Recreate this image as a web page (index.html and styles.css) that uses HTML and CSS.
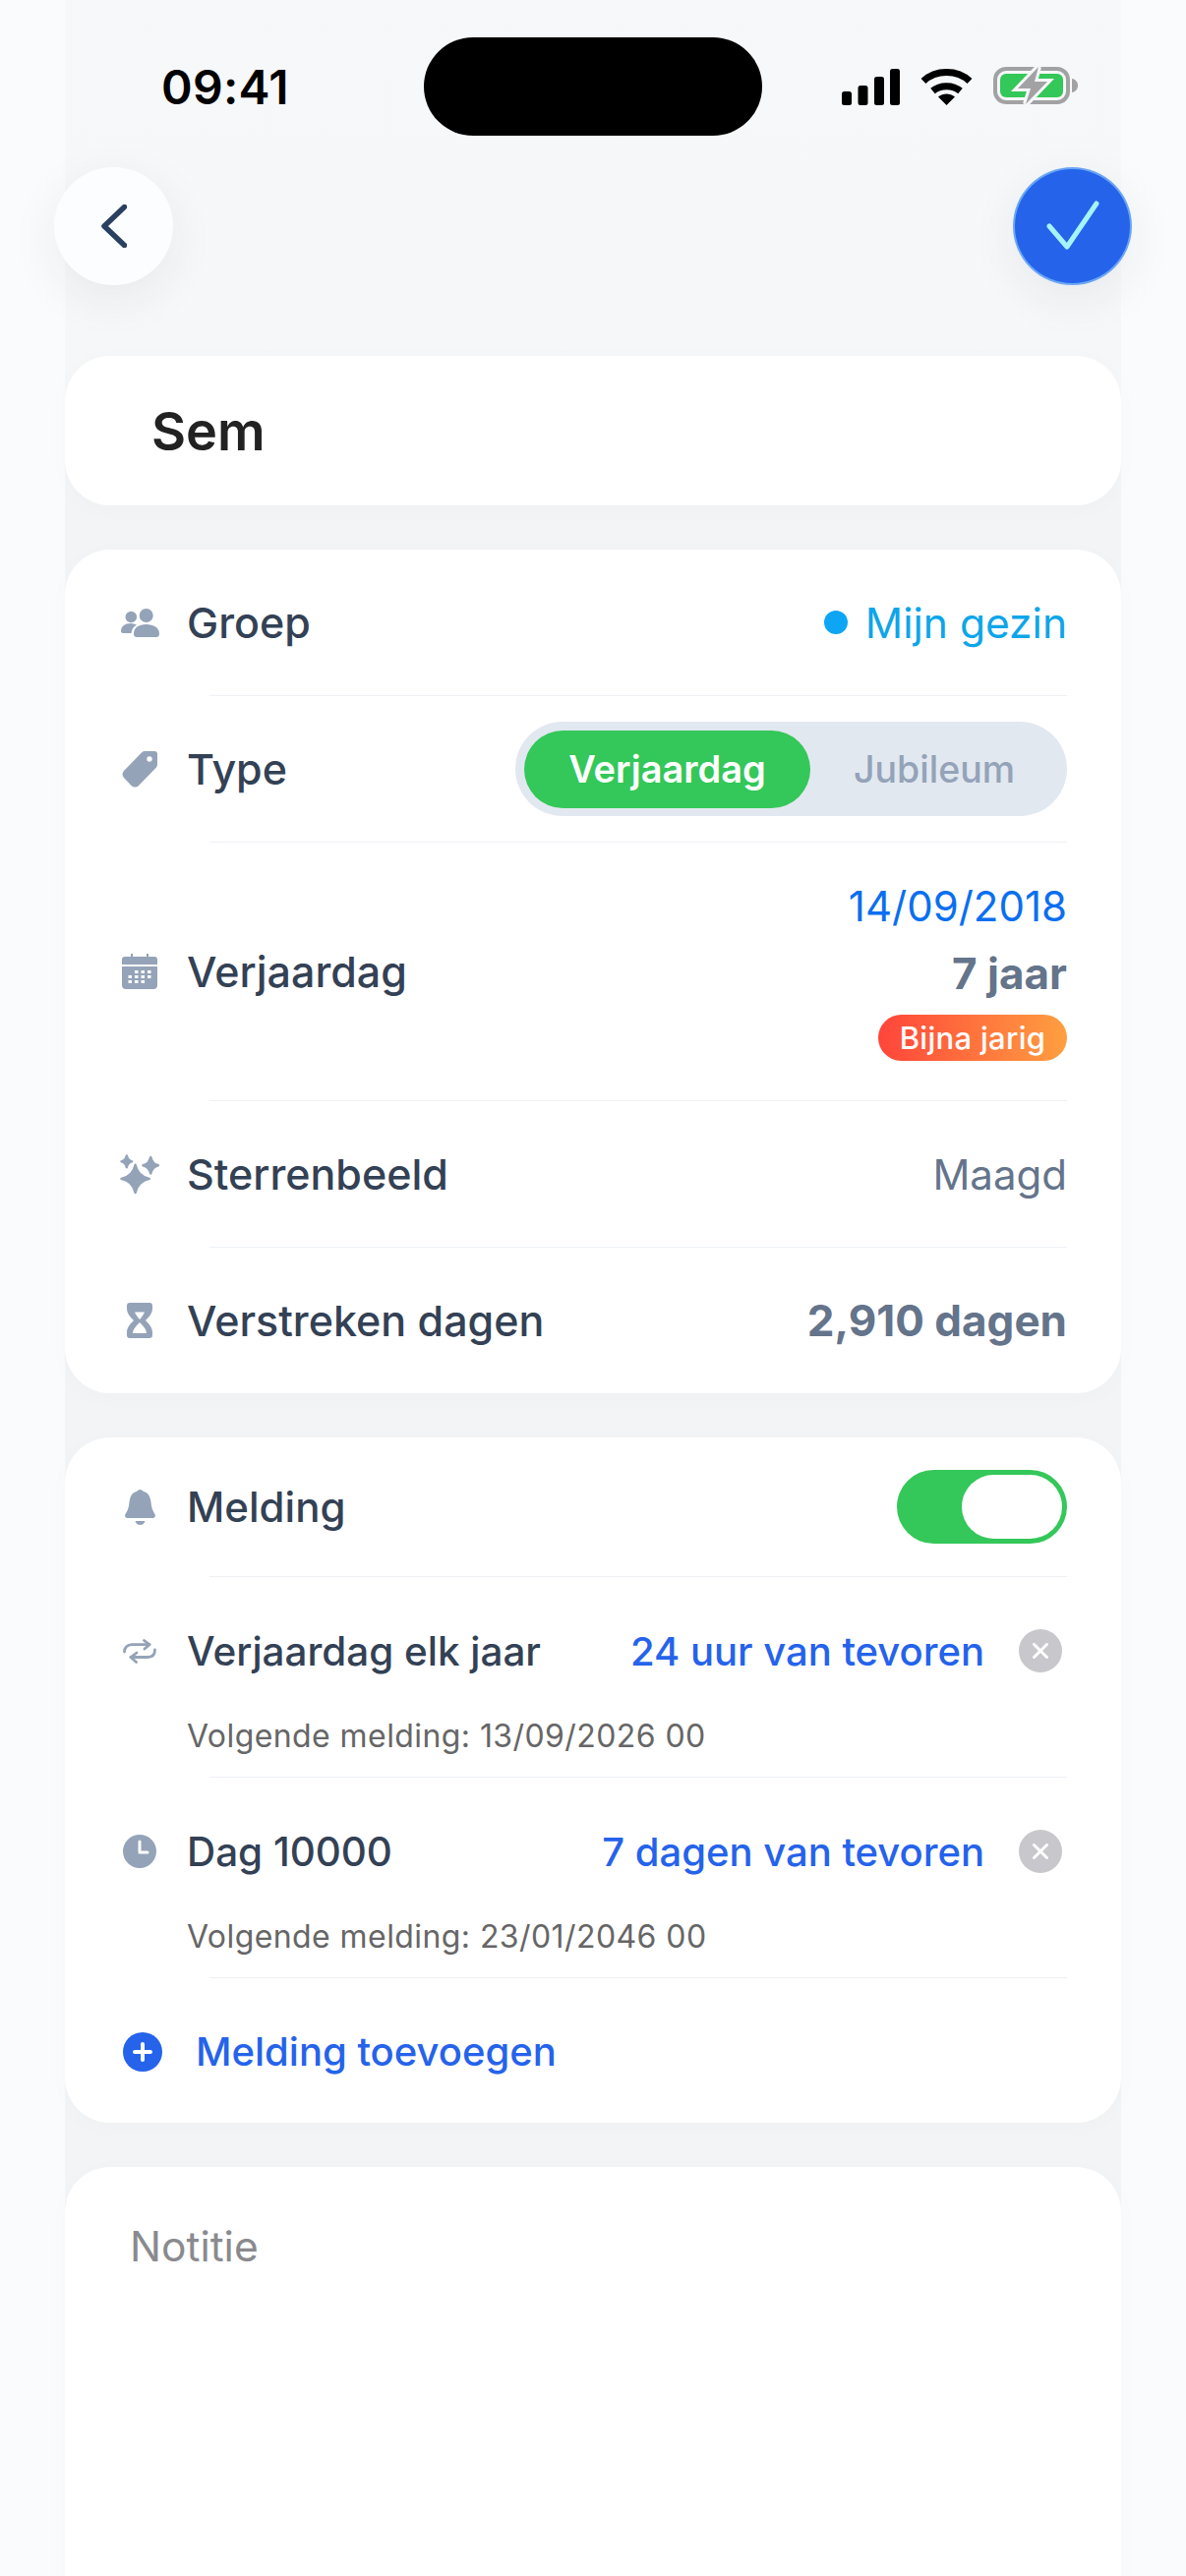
FILE: index.html
```html
<!DOCTYPE html>
<html lang="nl">
<head>
<meta charset="utf-8">
<title>Sem</title>
<link rel="stylesheet" href="styles.css">
</head>
<body>
<div class="phone">
  <div class="status">
    <span class="time">09:41</span>
    <div class="island"></div>
    <div class="sys">
      <svg class="i-signal" viewBox="0 0 59 38"><rect x="0" y="24" width="10" height="14" rx="2.5"/><rect x="16.500" y="18" width="10" height="20" rx="2.500"/><rect x="33" y="9" width="10" height="29" rx="2.500"/><rect x="49" y="1" width="10" height="37" rx="2.500"/></svg>
      <svg class="i-wifi" viewBox="0 0 53 38"><path class="wifi-arc" d="M3 13.500C15.500 1.500 37.500 1.500 50 13.500"/><path class="wifi-arc" d="M12.500 23.500C20 17 33 17 40.500 23.500"/><path d="M26.500 38L18 29.500C23 25.500 30 25.500 35 29.500Z"/></svg>
      <svg class="i-batt" viewBox="0 0 86 40"><rect class="batt-shell" x="2" y="3" width="74" height="34" rx="11"/><rect class="batt-fill" x="7" y="8" width="64" height="24" rx="6"/><path class="batt-cap" d="M80 13C83.500 13.500 86 16 86 20S83.500 26.500 80 27Z"/><path class="batt-gap" d="M46 1L25 23H38L33 39L55 16H42Z"/><path class="batt-bolt" d="M46 1L25 23H38L33 39L55 16H42Z"/></svg>
    </div>
  </div>

  <div class="nav">
    <button class="round back"><svg class="i-back" viewBox="0 0 26 44"><path d="M23.500 2.500L3 22L23.500 41.500"/></svg></button>
    <button class="round ok"><svg class="i-ok" viewBox="0 0 56 52"><path d="M4 26L22 47L52 3"/></svg></button>
  </div>

  <main class="content">
    <section class="card name-card"><span class="name">Sem</span></section>

    <section class="card">
      <div class="row">
        <span class="ic"><svg class="i-group" viewBox="0 0 39 29"><circle cx="10.300" cy="8.500" r="5.800"/><circle cx="25.700" cy="7" r="7"/><path d="M13 25.500C13 19.500 18 16 25.700 16C33 16 39 19.500 39 25.500C39 28 38 29 36 29H16C14 29 13 28 13 25.500Z"/><path d="M0 23C0 18 4 15 10 15C12 15 14 15.500 16 16.500C13 18 11 21 10.500 25H2C1 25 0 24 0 23Z"/></svg></span>
        <span class="label">Groep</span>
        <span class="group-val"><i class="dot"></i>Mijn gezin</span>
      </div>
      <div class="divider"></div>
      <div class="row">
        <span class="ic"><svg class="i-tag" viewBox="0 0 36 37"><path d="M23 0H33C35 0 36 1 36 3V13C36 15 35.500 16 34 17.500L17 35C15 37 12 37 10 35.500L2 27C0 25 0 22 2 20L19.500 2C21 .5 22 0 23 0Z"/><circle class="hole" cx="28" cy="8" r="2.700"/></svg></span>
        <span class="label">Type</span>
        <div class="segment">
          <span class="seg-on">Verjaardag</span>
          <span class="seg-off">Jubileum</span>
        </div>
      </div>
      <div class="divider"></div>
      <div class="row row-tall">
        <span class="ic"><svg class="i-cal" viewBox="0 0 36 36"><path d="M3 3H9V0H11V3H25V0H27V3H33C35 3 36 4 36 6V11H0V6C0 4 1 3 3 3Z"/><path d="M0 13H36V32C36 34.500 34.500 36 32 36H4C1.500 36 0 34.500 0 32Z"/><g class="hole"><rect x="13" y="17" width="3.500" height="3"/><rect x="19.500" y="17" width="3.500" height="3"/><rect x="26" y="17" width="3.500" height="3"/><rect x="6.500" y="22" width="3.500" height="3"/><rect x="13" y="22" width="3.500" height="3"/><rect x="19.500" y="22" width="3.500" height="3"/><rect x="26" y="22" width="3.500" height="3"/><rect x="6.500" y="27" width="3.500" height="3"/><rect x="13" y="27" width="3.500" height="3"/><rect x="19.500" y="27" width="3.500" height="3"/></g></svg></span>
        <span class="label">Verjaardag</span>
        <div class="date-col">
          <span class="date">14/09/2018</span>
          <span class="age">7 jaar</span>
          <span class="soon">Bijna jarig</span>
        </div>
      </div>
      <div class="divider"></div>
      <div class="row">
        <span class="ic"><svg class="i-spark" viewBox="0 0 41 42"><path d="M16 11.500Q18.500 23.500 30.500 26Q18.500 28.500 16 40.500Q13.500 28.500 1.500 26Q13.500 23.500 16 11.500Z"/><path d="M7 2Q8 7 12.500 8Q8 9 7 14Q6 9 1.500 8Q6 7 7 2Z"/><path d="M32 3.500Q33.500 10.500 40 12Q33.500 13.500 32 20.500Q30.500 13.500 24 12Q30.500 10.500 32 3.500Z"/></svg></span>
        <span class="label">Sterrenbeeld</span>
        <span class="plain">Maagd</span>
      </div>
      <div class="divider"></div>
      <div class="row">
        <span class="ic"><svg class="i-hour" viewBox="0 0 26 36"><path d="M3 0H23C25 0 26 1 26 3V6C26 11 22 15 19 18C22 21 26 25 26 30V33C26 35 25 36 23 36H3C1 36 0 35 0 33V30C0 25 4 21 7 18C4 15 0 11 0 6V3C0 1 1 0 3 0Z"/><path class="hole" d="M8 9.500H18C17 12 15 14.500 13 17C11 14.500 9 12 8 9.500Z"/><path class="hole" d="M13 20C16 23 20 27 20 31H6C6 27 10 23 13 20Z"/></svg></span>
        <span class="label">Verstreken dagen</span>
        <span class="strong">2,910 dagen</span>
      </div>
    </section>

    <section class="card">
      <div class="row row-first">
        <span class="ic"><svg class="i-bell" viewBox="0 0 31 36"><path d="M15.500 0C17 0 18 1 19 2C24 3 26 8 26.500 13C27 18 28 21 30.500 25C31.500 27 30.500 29 28.500 29H2.500C.5 29 -.5 27 .5 25C3 21 4 18 4.500 13C5 8 7 3 12 2C13 1 14 0 15.500 0Z"/><path d="M10.500 32H20.500C19.500 35 17.500 36 15.500 36S11.500 35 10.500 32Z"/></svg></span>
        <span class="label label-m">Melding</span>
        <div class="toggle"><span class="thumb"></span></div>
      </div>
      <div class="divider"></div>
      <div class="alert">
        <div class="alert-top">
          <span class="ic"><svg class="i-repeat" viewBox="0 0 34 25"><path d="M1.500 13C1.500 9 4.500 5.700 9 5.700H27"/><path d="M21.500 1.500L27 5.700L22 10"/><path d="M32.500 11C32.500 15.500 30 18.500 25 18.500H8"/><path d="M14 14L8 18.500L13.500 23.500"/></svg></span>
          <span class="label label-s">Verjaardag elk jaar</span>
          <span class="link">24 uur van tevoren</span>
          <span class="clear"><svg class="i-x" viewBox="0 0 16 16"><path d="M1.500 1.500L14.500 14.500M14.500 1.500L1.500 14.500"/></svg></span>
        </div>
        <p class="next">Volgende melding: 13/09/2026 00</p>
      </div>
      <div class="divider"></div>
      <div class="alert">
        <div class="alert-top">
          <span class="ic"><svg class="i-clock" viewBox="0 0 34 34"><circle cx="17" cy="17" r="17"/><path class="hands" d="M17 7V18H25"/></svg></span>
          <span class="label label-s">Dag 10000</span>
          <span class="link">7 dagen van tevoren</span>
          <span class="clear"><svg class="i-x" viewBox="0 0 16 16"><path d="M1.500 1.500L14.500 14.500M14.500 1.500L1.500 14.500"/></svg></span>
        </div>
        <p class="next">Volgende melding: 23/01/2046 00</p>
      </div>
      <div class="divider"></div>
      <div class="add">
        <span class="add-ic"><svg class="i-plus" viewBox="0 0 20 20"><path d="M10 2V18M2 10H18"/></svg></span>
        <span class="add-text">Melding toevoegen</span>
      </div>
    </section>

    <section class="card note"><span class="note-text">Notitie</span></section>
  </main>
</div>
</body>
</html>
```

FILE: styles.css
```css
* { box-sizing: border-box; }
html, body { margin: 0; padding: 0; }
body { width: 1206px; height: 2620px; overflow: hidden; font-family: Inter, "Noto Sans", sans-serif; }
.phone {
  width: 1206px; height: 2620px; overflow: hidden; display: flex; flex-direction: column;
  background:
    linear-gradient(180deg, rgba(250, 251, 252, .55) 0, rgba(250, 251, 252, .5) 320px, rgba(250, 251, 252, 0) 520px),
    linear-gradient(90deg, #fafbfc 66px, #f3f4f6 66px, #f3f4f6 1140px, #fafbfc 1140px);
}
svg { display: block; }
p { margin: 0; }
button { border: 0; padding: 0; }

.status { height: 170px; flex: none; padding: 38px 0 0 164px; display: flex; align-items: flex-start; }
.time { font-size: 48px; font-weight: 600; color: #000; line-height: 58px; margin-top: 22px; width: 267px; flex: none; letter-spacing: .3px; }
.island { width: 344px; height: 100px; background: #000; border-radius: 50px; flex: none; }
.sys { display: flex; align-items: flex-end; gap: 21px; margin: 30px 0 0 81px; height: 39px; }
.i-signal { width: 59px; height: 38px; fill: #000; }
.i-wifi { width: 53px; height: 38px; fill: #000; }
.wifi-arc { fill: none; stroke: #000; stroke-width: 7; }
.i-batt { width: 86px; height: 40px; }
.batt-shell { fill: none; stroke: #a2a2a5; stroke-width: 4; }
.batt-fill { fill: #34c759; }
.batt-cap { fill: #a2a2a5; }
.batt-gap { fill: #f6f7f9; stroke: #f6f7f9; stroke-width: 6; }
.batt-bolt { fill: #a2a2a5; }

.nav { height: 120px; flex: none; padding: 0 55px; display: flex; justify-content: space-between; }
.round { width: 121px; height: 120px; border-radius: 50%; display: flex; align-items: center; justify-content: center; box-shadow: 0 14px 50px rgba(30, 41, 59, .07); }
.back { background: #fcfdfe; }
.ok { background: #2563eb; border: 2px solid #6aa6f5; }
.i-back { width: 26px; height: 44px; fill: none; stroke: #2a4060; stroke-width: 5.5; stroke-linecap: round; stroke-linejoin: round; }
.i-ok { width: 56px; height: 52px; fill: none; stroke: #a5f3fc; stroke-width: 5; stroke-linecap: round; stroke-linejoin: round; }

.content { margin: 72px 66px 0; display: flex; flex-direction: column; gap: 45px; }
.card { background: #fff; border-radius: 46px; box-shadow: 0 4px 24px rgba(30, 41, 59, .02); }
.name-card { height: 152px; padding-left: 88px; display: flex; align-items: center; flex: none; }
.name { font-size: 54px; font-weight: 600; color: #222; }

.row { height: 148px; padding: 0 55px 0 56px; display: flex; align-items: center; }
.row-tall { height: 262px; }
.row-first { height: 141px; }
.divider { height: 1px; margin: 0 55px 0 147px; background: #eef0f4; }
.ic { width: 40px; flex: none; display: flex; justify-content: center; margin-right: 28px; }
.label { font-size: 43px; font-weight: 500; color: #334155; flex: 1; white-space: nowrap; }
.label-m { font-size: 42px; }
.label-s { font-size: 40.400px; }
.hole { fill: #fff; }

.i-group, .i-tag, .i-cal, .i-spark, .i-hour, .i-bell { fill: #94a3b8; }
.i-group { width: 39px; height: 29px; }
.i-tag { width: 36px; height: 37px; }
.i-cal { width: 36px; height: 36px; }
.i-spark { width: 41px; height: 42px; stroke: #94a3b8; stroke-width: 2.5; stroke-linejoin: round; }
.i-hour { width: 26px; height: 36px; }
.i-bell { width: 31px; height: 36px; }
.i-repeat { width: 34px; height: 25px; fill: none; stroke: #94a3b8; stroke-width: 2.8; stroke-linecap: round; stroke-linejoin: round; }
.i-clock { width: 34px; height: 34px; fill: #94a3b8; }
.hands { fill: none; stroke: #fff; stroke-width: 3; stroke-linecap: round; stroke-linejoin: round; }

.group-val { display: flex; align-items: center; gap: 18px; font-size: 42.500px; color: #0ea5e9; }
.dot { width: 24px; height: 24px; border-radius: 50%; background: #0ea5f5; }

.segment { width: 561px; height: 96px; border-radius: 48px; background: #e2e8f0; padding: 9px; display: flex; align-items: center; flex: none; }
.seg-on { width: 291px; height: 79px; border-radius: 40px; background: #34c759; color: #fff; font-size: 38px; font-weight: 600; display: flex; align-items: center; justify-content: center; }
.seg-off { flex: 1; text-align: center; font-size: 37.500px; font-weight: 500; color: #94a3b8; }

.date-col { display: flex; flex-direction: column; align-items: flex-end; }
.date { font-size: 42px; color: #0a6ff0; line-height: 50px; }
.age { font-size: 44px; font-weight: 700; color: #64748b; line-height: 50px; margin-top: 18px; }
.soon { margin-top: 17px; height: 47px; width: 192px; border-radius: 24px; background: linear-gradient(90deg, #ff453a, #ff9f40); color: #fff; font-size: 31px; font-weight: 500; letter-spacing: .3px; display: flex; align-items: center; justify-content: center; }
.plain { font-size: 42px; color: #64748b; }
.strong { font-size: 44px; font-weight: 700; color: #64748b; }

.toggle { width: 173px; height: 75px; border-radius: 38px; background: #34c759; padding: 5px; display: flex; justify-content: flex-end; flex: none; }
.thumb { width: 102px; height: 65px; border-radius: 33px; background: #fff; }

.alert { height: 203px; padding: 0 60px 0 56px; display: flex; flex-direction: column; }
.alert-top { height: 150px; display: flex; align-items: center; }
.link { font-size: 40px; font-weight: 500; color: #2563eb; white-space: nowrap; }
.clear { width: 44px; height: 44px; margin-left: 35px; border-radius: 50%; background: #c7c7cc; display: flex; align-items: center; justify-content: center; flex: none; }
.i-x { width: 16px; height: 16px; fill: none; stroke: #fff; stroke-width: 3; stroke-linecap: round; }
.next { margin: -8px 0 0 68px; font-size: 32px; letter-spacing: .42px; color: #666; line-height: 40px; white-space: nowrap; }

.add { height: 147px; padding: 2px 0 0 59px; display: flex; align-items: center; gap: 34px; }
.add-ic { width: 40px; height: 40px; border-radius: 50%; background: #2563eb; display: flex; align-items: center; justify-content: center; }
.i-plus { width: 20px; height: 20px; fill: none; stroke: #fff; stroke-width: 4; stroke-linecap: round; }
.add-text { font-size: 40px; font-weight: 500; color: #2563eb; }

.note { height: 500px; padding: 57px 0 0 66px; flex: none; }
.note-text { font-size: 42.500px; color: #8a8a8e; line-height: 48px; }
```
